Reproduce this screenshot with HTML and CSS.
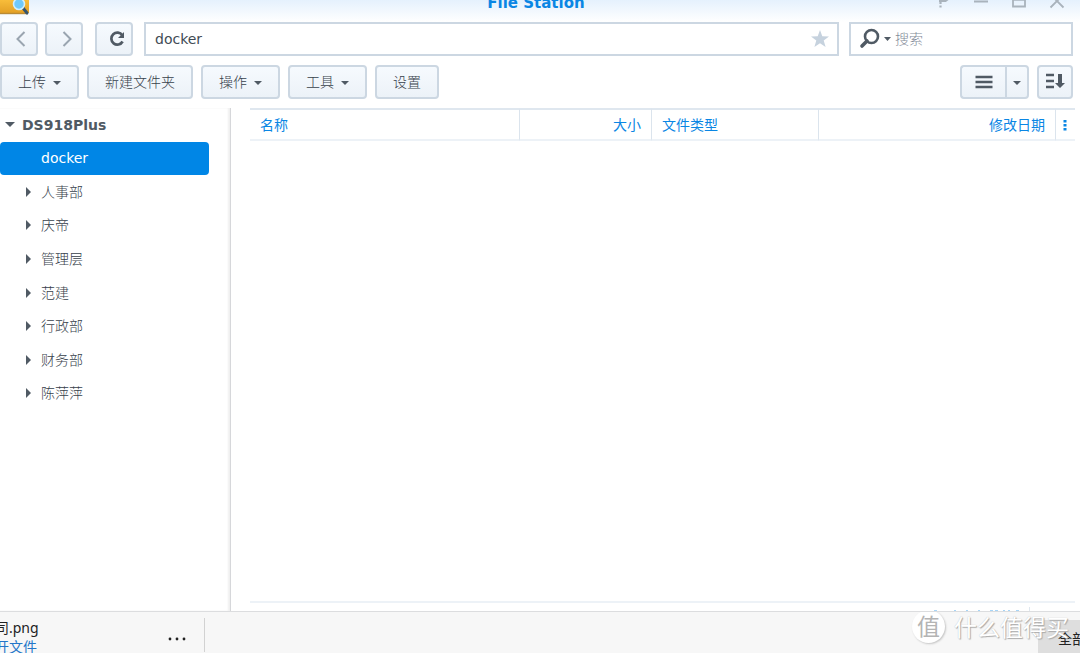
FILE: index.html
```html
<!DOCTYPE html>
<html lang="zh-CN">
<head>
<meta charset="utf-8">
<meta name="viewport" content="width=device-width, initial-scale=1">
<title>File Station</title>
<link rel="stylesheet" href="styles.css">
</head>
<body>
<div class="app">
  <header class="titlebar">
    <svg class="app-icon" width="30" height="22" viewBox="0 0 30 22" aria-hidden="true">
      <defs>
        <linearGradient id="folder" x1="0" y1="0" x2="0" y2="1"><stop offset="0" stop-color="#f8bd3a"/><stop offset="1" stop-color="#e3a026"/></linearGradient>
      </defs>
      <path d="M0 0H29V13H0Z" fill="url(#folder)"/>
      <path d="M0 13.5H28" stroke="#b98a35" stroke-width="1.4"/>
      <path d="M23 8l4 5" stroke="#35546e" stroke-width="3" stroke-linecap="round"/>
      <circle cx="19" cy="4" r="5.5" fill="#6fc9fa" stroke="#cfeefc" stroke-width="1.6"/>
    </svg>
    <h1 class="title">File Station</h1>
    <div class="window-controls">
      <button class="window-button" aria-label="帮助"><svg width="16" height="22" viewBox="0 0 16 22"><path d="M4 1H10.500L13 -1M5.500 0V4M5.500 5.500V7.500" fill="none" stroke="#a9b3bc" stroke-width="2.200"/></svg></button>
      <button class="window-button" aria-label="最小化"><svg width="16" height="22" viewBox="0 0 16 22"><path d="M1 1.500H15" stroke="#a9b3bc" stroke-width="2"/></svg></button>
      <button class="window-button" aria-label="最大化"><svg width="16" height="22" viewBox="0 0 16 22"><path d="M2 -4H14V6.500H2Z" fill="none" stroke="#a9b3bc" stroke-width="1.800"/><path d="M2 0H14" stroke="#a9b3bc" stroke-width="1.500"/></svg></button>
      <button class="window-button" aria-label="关闭"><svg width="16" height="22" viewBox="0 0 16 22"><path d="M1.500 7.500L14.500 -5.500M14.500 7.500L1.500 -5.500" stroke="#a9b3bc" stroke-width="1.800"/></svg></button>
    </div>
  </header>

  <div class="nav">
    <button class="button nav-button back" aria-label="后退"><svg width="16" height="18" viewBox="0 0 16 18"><path d="M11.500 2L4.500 9l7 7" fill="none" stroke="#9aa5b0" stroke-width="2"/></svg></button>
    <button class="button nav-button forward" aria-label="前进"><svg width="16" height="18" viewBox="0 0 16 18"><path d="M5.500 2l7 7-7 7" fill="none" stroke="#9aa5b0" stroke-width="2"/></svg></button>
    <button class="button nav-button refresh" aria-label="刷新"><svg width="18" height="18" viewBox="0 0 18 18"><path d="M14.300 5.200A6 6 0 1 0 14.600 11.500" fill="none" stroke="#505a64" stroke-width="2.700"/><path d="M16 2V8H10Z" fill="#505a64"/></svg></button>
    <div class="path">
      <input class="field" type="text" value="docker" aria-label="路径">
      <button class="star" aria-label="收藏"><svg width="20" height="20" viewBox="0 0 20 20"><path d="M10 1l2.300 6.300 6.700.2-5.300 4.100 1.900 6.400L10 14.200 4.400 18l1.900-6.400L1 7.500l6.700-.2Z" fill="#c6d2de"/></svg></button>
    </div>
    <div class="search">
      <svg width="32" height="22" viewBox="0 0 32 22" aria-hidden="true"><circle cx="12.500" cy="8.500" r="6.500" fill="none" stroke="#505a64" stroke-width="2.600"/><path d="M8 13l-5 5" stroke="#505a64" stroke-width="3.600" stroke-linecap="round"/><path d="M25 9h7l-3.500 4Z" fill="#505a64"/></svg>
      <input class="field" type="search" placeholder="搜索" aria-label="搜索">
    </div>
  </div>

  <div class="toolbar">
    <button class="button">上传<span class="caret"></span></button>
    <button class="button">新建文件夹</button>
    <button class="button">操作<span class="caret"></span></button>
    <button class="button">工具<span class="caret"></span></button>
    <button class="button">设置</button>
    <div class="view-tools">
      <div class="split">
        <button class="button view-button" aria-label="列表视图"><svg width="18" height="14" viewBox="0 0 18 14"><path d="M.5 2H17.500M.5 7H17.500M.5 12H17.500" stroke="#505a64" stroke-width="2.500"/></svg></button>
        <button class="button view-menu" aria-label="视图选项"><span class="caret"></span></button>
      </div>
      <button class="button sort-button" aria-label="排序"><svg width="20" height="18" viewBox="0 0 20 18"><path d="M1 3H9M1 9H9M1 15H9" stroke="#505a64" stroke-width="2.500"/><path d="M13 2h4v9h3l-5 5-5-5h3Z" fill="#505a64"/></svg></button>
    </div>
  </div>

  <div class="main">
    <nav class="sidebar" aria-label="文件夹">
      <ul class="tree">
        <li class="node root"><span class="arrow-down"></span>DS918Plus</li>
        <li class="node selected">docker</li>
        <li class="node"><span class="arrow-right"></span>人事部</li>
        <li class="node"><span class="arrow-right"></span>庆帝</li>
        <li class="node"><span class="arrow-right"></span>管理层</li>
        <li class="node"><span class="arrow-right"></span>范建</li>
        <li class="node"><span class="arrow-right"></span>行政部</li>
        <li class="node"><span class="arrow-right"></span>财务部</li>
        <li class="node"><span class="arrow-right"></span>陈萍萍</li>
      </ul>
    </nav>
    <main class="content">
      <table class="files">
        <colgroup><col class="col-name"><col class="col-size"><col class="col-type"><col class="col-date"><col class="col-more"></colgroup>
        <thead>
          <tr>
            <th>名称</th>
            <th class="end">大小</th>
            <th>文件类型</th>
            <th class="end">修改日期</th>
            <th class="more"><button class="more-button" aria-label="更多列"><svg width="4" height="12" viewBox="0 0 4 12"><path d="M.5 1h3v2.500h-3ZM.5 5h3v2.500h-3ZM.5 9h3v2.500h-3Z" fill="#0a86e4"/></svg></button></th>
          </tr>
        </thead>
      </table>
      <div class="statusbar">
        <svg width="100" height="9" viewBox="0 0 100 9" aria-hidden="true"><path d="M4 8h3M24 8h2M36 8h2M48 8h2M60 8h3M65 8h3M73 8h2M78 8h2M86 8h3" stroke="#8bc8f5" stroke-width="1.500"/><path d="M99.500 4V9" stroke="#dfe7ef"/></svg>
      </div>
    </main>
  </div>

  <footer class="downloads">
    <div class="download">
      <div class="download-text">
        <span>司.png</span>
        <a class="open" href="#">开文件</a>
      </div>
      <button class="dots" aria-label="更多选项"><svg width="20" height="4" viewBox="0 0 20 4"><circle cx="3" cy="2" r="1.400" fill="#222"/><circle cx="10" cy="2" r="1.400" fill="#222"/><circle cx="17" cy="2" r="1.400" fill="#222"/></svg></button>
    </div>
    <button class="show-all">全部显示</button>
    <div class="watermark"><span class="seal">值</span><span>什么值得买</span></div>
  </footer>
</div>
</body>
</html>
```

FILE: styles.css
```css
* {
  box-sizing: border-box;
}

body {
  margin: 0;
  background: #fff;
  color: #505a64;
  font: 14px/20px "DejaVu Sans", "Noto Sans CJK SC", sans-serif;
}

button,
input {
  font: inherit;
  color: inherit;
}

button {
  padding: 0;
  border: 0;
  background: none;
}

svg {
  display: block;
  flex: none;
}

.app {
  display: flex;
  flex-direction: column;
  height: 100vh;
  overflow: hidden;
}

.titlebar {
  display: grid;
  grid-template-columns: 1fr auto 1fr;
  height: 22px;
  flex: none;
  padding-right: 8px;
  overflow: hidden;
  background: linear-gradient(#e5f1fd, #fff);
}

.title {
  align-self: start;
  margin: -7px 0 0;
  color: #0a86e4;
  font-size: 15px;
  line-height: 20px;
}

.window-controls {
  display: flex;
  justify-content: flex-end;
  gap: 22px;
  padding-right: 7px;
}

.nav,
.toolbar {
  display: flex;
  flex: none;
  padding-right: 7px;
}

.nav {
  height: 34px;
}

.button {
  display: flex;
  align-items: center;
  justify-content: center;
  height: 34px;
  padding: 0 16px;
  border: 2px solid #ccd7e2;
  border-radius: 4px;
  background: linear-gradient(#f6fafe, #ecf2f8);
  color: #37414b;
  font-weight: 300;
  white-space: nowrap;
}

.nav-button {
  width: 38px;
  padding: 0;
  margin-right: 7px;
}

.nav-button.back,
.nav-button.forward {
  padding-left: 4px;
}

.nav-button.refresh {
  padding-left: 5px;
  margin: 0 11px 0 5px;
}

.path,
.search {
  display: flex;
  align-items: center;
  border: 2px solid #ccd7e2;
  background: #fff;
}

.path {
  flex: 1;
  padding: 0 7px 0 9px;
}

.search {
  width: 224px;
  margin-left: 10px;
  padding-left: 8px;
}

.field {
  flex: 1;
  min-width: 0;
  height: 26px;
  padding: 0;
  border: 0;
  outline: 0;
  background: none;
  color: #414b55;
}

.search .field {
  margin-left: 4px;
  font-weight: 300;
}

.field::placeholder {
  color: #7f8a97;
  opacity: 1;
}

.toolbar {
  gap: 8px;
  margin-top: 9px;
}

.caret {
  margin: 2px 0 0 7px;
  border: 4px solid transparent;
  border-top-color: #505a64;
  border-bottom: 0;
}

.view-tools {
  display: flex;
  gap: 8px;
  margin-left: auto;
}

.split {
  display: flex;
}

.view-button {
  width: 45px;
  padding: 0;
  border-right: 0;
  border-radius: 4px 0 0 4px;
}

.view-menu {
  width: 24px;
  padding: 0;
  border-radius: 0 4px 4px 0;
}

.view-menu .caret {
  margin-left: 0;
}

.sort-button {
  width: 36px;
  padding: 0 0 3px;
}

.main {
  display: flex;
  flex: 1;
  min-height: 0;
  margin-top: 9px;
}

.sidebar {
  width: 231px;
  flex: none;
  border-right: 1px solid #d6d7da;
  box-shadow: inset -2px 0 2px #f0f0f0;
}

.tree {
  display: grid;
  grid-auto-rows: 1fr;
  min-height: 302px;
  margin: 0;
  padding: 0;
  list-style: none;
}

.node {
  display: flex;
  align-items: center;
  width: 209px;
  padding-left: 26px;
  color: #37414b;
  font-weight: 300;
}

.node.root {
  padding-left: 5px;
  color: #505a64;
  font-weight: 700;
}

.node.selected {
  padding-left: 41px;
  border-radius: 4px;
  background: #0086e6;
  color: #fff;
  font-weight: 400;
}

.arrow-down {
  margin-right: 7px;
  border: 5px solid transparent;
  border-top-color: #505a64;
  border-bottom: 0;
}

.arrow-right {
  margin-right: 10px;
  border: 5px solid transparent;
  border-left-color: #505a64;
  border-right: 0;
}

.content {
  display: flex;
  flex: 1;
  flex-direction: column;
  justify-content: space-between;
  min-width: 0;
  padding: 0 5px 0 19px;
}

.files {
  width: 100%;
  table-layout: fixed;
  border-collapse: separate;
  border-spacing: 0;
}

.col-size {
  width: 132px;
}

.col-type {
  width: 167px;
}

.col-date {
  width: 237px;
}

.col-more {
  width: 19px;
}

.files th {
  height: 33px;
  padding: 0 10px;
  border-top: 2px solid #dfe7ef;
  border-right: 1px solid #dbe4ed;
  border-bottom: 2px solid #edf2f7;
  color: #0a86e4;
  font-weight: 400;
  text-align: left;
}

.files th.end {
  text-align: right;
}

.files th.more {
  padding: 0 7px;
  border-right: 0;
}

.more-button {
  display: block;
}

.statusbar {
  display: flex;
  justify-content: flex-end;
  height: 10px;
  padding-right: 45px;
  border-top: 2px solid #edf2f7;
}

.downloads {
  position: relative;
  display: flex;
  justify-content: space-between;
  height: 42px;
  flex: none;
  overflow: hidden;
  border-top: 1px solid #dcdddf;
  background: #f7f7f7;
  color: #222;
  font-family: "Noto Sans", "Noto Sans CJK SC", sans-serif;
}

.download {
  display: flex;
  justify-content: space-between;
  width: 205px;
  height: 34px;
  margin-top: 6px;
  padding-right: 17px;
  border-right: 1px solid #d2d2d2;
}

.download-text {
  display: flex;
  flex-direction: column;
  margin-left: -5px;
  line-height: 19px;
  white-space: nowrap;
}

.dots {
  height: 4px;
  margin-top: 19px;
}

.open {
  color: #2376c9;
  text-decoration: none;
}

.show-all {
  width: 42px;
  height: 34px;
  margin-top: 8px;
  padding: 4px 0 0 20px;
  overflow: hidden;
  background: #dedede;
  text-align: left;
  white-space: nowrap;
}

.watermark {
  position: absolute;
  top: -2px;
  right: 11px;
  display: flex;
  align-items: center;
  gap: 9px;
  color: #fff;
  font-size: 23px;
  line-height: 32px;
  text-shadow: 1px 1px 1px #aaa, 0 0 1px #bbb;
  pointer-events: none;
}

.seal {
  width: 33px;
  height: 33px;
  border-radius: 50%;
  background: #fff;
  box-shadow: 1px 1px 2px #c4c4c4;
  color: #b4b4b4;
  text-align: center;
  text-shadow: none;
}
```
